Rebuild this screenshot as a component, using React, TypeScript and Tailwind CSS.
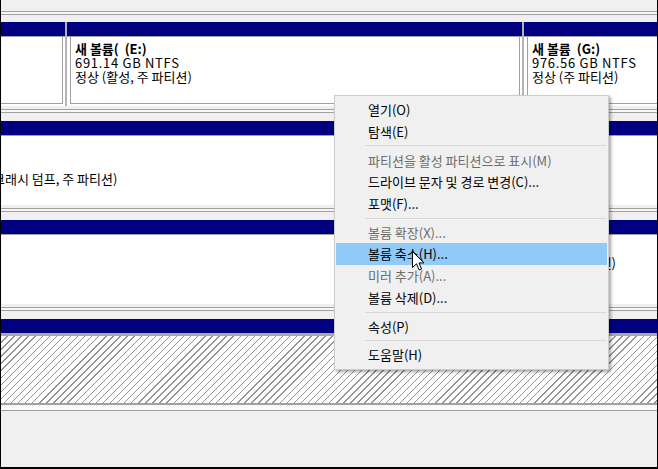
import React from 'react';

type Item = { label: string; disabled?: boolean; active?: boolean } | 'sep';

const menuItems: Item[] = [
  { label: '열기(O)' },
  { label: '탐색(E)' },
  'sep',
  { label: '파티션을 활성 파티션으로 표시(M)', disabled: true },
  { label: '드라이브 문자 및 경로 변경(C)...' },
  { label: '포맷(F)...' },
  'sep',
  { label: '볼륨 확장(X)...', disabled: true },
  { label: '볼륨 축소(H)...', active: true },
  { label: '미러 추가(A)...', disabled: true },
  { label: '볼륨 삭제(D)...' },
  'sep',
  { label: '속성(P)' },
  'sep',
  { label: '도움말(H)' },
];

// 디스크 행 사이의 구분선
const RowGap = () => (
  <div className="flex flex-col shrink-0">
    <div className="h-[3px]" />
    <div className="h-px bg-[#a0a0a0]" />
    <div className="h-[2px] bg-[#f7f7f7]" />
    <div className="h-px bg-[#a0a0a0]" />
    <div className="h-[8px]" />
  </div>
);

const Partition: React.FC<{
  className: string;
  boxClass: string;
  lines?: string[];
}> = ({ className, boxClass, lines }) => (
  <div className={`flex flex-col ${className}`}>
    <div className="h-[14px] bg-[#000080]" />
    <div className="h-px bg-[#a0a0a0]" />
    <div className="flex-1 bg-white flex">
      <div className={`flex-1 border-[#a0a0a0] pt-[5px] pl-[4px] leading-[14px] text-[13px] text-black ${boxClass}`}>
        {lines?.map((l, i) => (
          <div
            key={i}
            className={`whitespace-pre ${i === 0 ? 'font-bold' : ''} ${i === 1 ? 'tracking-[0.7px]' : ''}`}
          >
            {l}
          </div>
        ))}
      </div>
    </div>
  </div>
);

const Divider = () => <div className="w-[2px] shrink-0 bg-[#b4b4b4]" />;

const Cursor = () => (
  <svg width="13" height="21" viewBox="0 0 13 21" className="absolute left-[411px] top-[251px]">
    <path
      d="M0.5 0.5 L0.5 16.5 L4.5 12.8 L7.2 19 L9.6 18 L7 11.9 L12 11.9 Z"
      fill="#ffffff"
      stroke="#000000"
      strokeWidth="1"
      strokeLinejoin="miter"
    />
  </svg>
);

const ContextMenu = () => (
  <div className="absolute left-[333px] top-[95px] w-[275px] h-[275px] bg-[#f0f0f0] border border-[#cccccc] shadow-[2px_2px_3px_rgba(0,0,0,0.35)] py-[3px] px-px flex flex-col">
    {menuItems.map((it, i) =>
      it === 'sep' ? (
        <div key={i} className="h-[7px] flex items-center pl-[29px] pr-px">
          <div className="h-px w-full bg-[#d7d7d7]" />
        </div>
      ) : (
        <div
          key={i}
          className={`h-[22px] flex items-center pl-[32px] text-[13px] whitespace-nowrap ${
            it.active ? 'bg-[#91c9f7]' : ''
          } ${it.disabled ? 'text-[#6d6d6d]' : 'text-black'}`}
        >
          {it.label}
        </div>
      )
    )}
  </div>
);

export default function App() {
  return (
    <div className="relative w-[658px] h-[469px] overflow-hidden bg-[#f0f0f0] border-l border-r border-b-2 border-black flex flex-col font-['Noto_Sans_CJK_KR','Noto_Sans',sans-serif]">
      {/* 위쪽 잘린 행 */}
      <div className="h-[11px] shrink-0" />
      <div className="h-px shrink-0 bg-[#a0a0a0]" />
      <div className="h-[2px] shrink-0 bg-[#f7f7f7]" />
      <div className="h-px shrink-0 bg-[#a0a0a0]" />
      <div className="h-[7px] shrink-0" />

      {/* 디스크 1 */}
      <div className="flex h-[84px] shrink-0">
        <Partition className="w-[64px] shrink-0" boxClass="border-r border-b mr-[2px] mb-[2px]" />
        <Divider />
        <Partition
          className="w-[455px] shrink-0"
          boxClass="border-l border-r border-b ml-[3px] mr-[2px] mb-[2px]"
          lines={['새 볼륨(  (E:)', '691.14 GB NTFS', '정상 (활성, 주 파티션)']}
        />
        <Divider />
        <Partition
          className="flex-1"
          boxClass="border-l border-b ml-[3px] mb-[2px]"
          lines={['새 볼륨  (G:)', '976.56 GB NTFS', '정상 (주 파티션)']}
        />
      </div>
      <RowGap />

      {/* 디스크 2 */}
      <div className="flex flex-col h-[84px] shrink-0">
        <div className="h-[14px] bg-[#000080]" />
        <div className="h-px bg-[#a0a0a0]" />
        <div className="flex-1 bg-white pt-[36px] leading-[14px] text-[13px] text-black">
          <div className="-ml-[8px] whitespace-pre">크래시 덤프, 주 파티션)</div>
        </div>
      </div>
      <RowGap />

      {/* 디스크 3 */}
      <div className="flex flex-col h-[84px] shrink-0">
        <div className="h-[14px] bg-[#000080]" />
        <div className="h-px bg-[#a0a0a0]" />
        <div className="flex-1 bg-white pt-[21px] leading-[14px] text-[13px] text-black">
          <div className="w-[615px] text-right whitespace-pre">정상 (주 파티션)</div>
        </div>
      </div>
      <RowGap />

      {/* 디스크 4 (선택됨) */}
      <div className="flex flex-col shrink-0">
        <div className="h-[14px] bg-[#000080]" />
        <div className="h-[3px] bg-[#a8a8a8]" />
        <div className="h-[67px] bg-white bg-[image:repeating-linear-gradient(135deg,#ffffff_0px,#ffffff_4px,#939393_4px,#939393_5px)]" />
        <div className="h-[2px] bg-[#a0a0a0]" />
        <div className="h-[5px] bg-[#fafafa]" />
        <div className="h-px bg-[#a0a0a0]" />
      </div>
      <div className="flex-1" />

      <ContextMenu />
      <Cursor />
    </div>
  );
}
